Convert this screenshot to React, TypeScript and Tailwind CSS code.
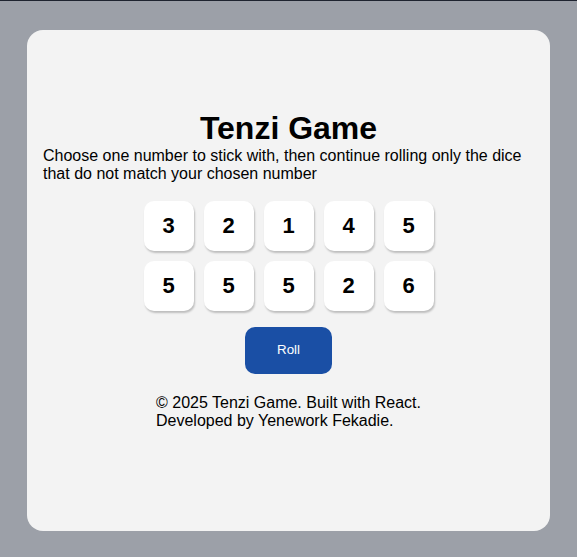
const dice = [3, 2, 1, 4, 5, 5, 5, 5, 2, 6]

function Die({ value }: { value: number }) {
  return (
    <button className="w-[50px] h-[50px] rounded-[10px] bg-white shadow-[1px_2px_2px_rgba(0,0,0,0.22)] flex items-center justify-center text-[22px] font-bold text-black">
      {value}
    </button>
  )
}

export default function App() {
  return (
    <div className="min-h-[557px] bg-[#9ca0a8] border-t border-[#1f2430] pt-[29px] px-[27px] font-['Liberation_Sans',Arial,sans-serif] text-black">
      <main className="h-[501px] bg-[#f3f3f3] rounded-2xl px-4 pt-[80px] flex flex-col">
        <h1 className="text-[32px] font-bold text-center leading-[1.15]">Tenzi Game</h1>
        <p className="text-base leading-[1.15]">
          Choose one number to stick with, then continue rolling only the dice that do not match your
          chosen number
        </p>

        <div className="mt-[17px] self-center grid grid-cols-5 gap-[10px]">
          {dice.map((d, i) => (
            <Die key={i} value={d} />
          ))}
        </div>

        <button className="mt-4 self-center w-[87px] h-[47px] rounded-[10px] bg-[#1a4fa5] text-white text-[13.33px]">
          Roll
        </button>

        <footer className="mt-[20px] self-center text-base leading-[1.15]">
          <p>© 2025 Tenzi Game. Built with React.</p>
          <p>Developed by Yenework Fekadie.</p>
        </footer>
      </main>
    </div>
  )
}
